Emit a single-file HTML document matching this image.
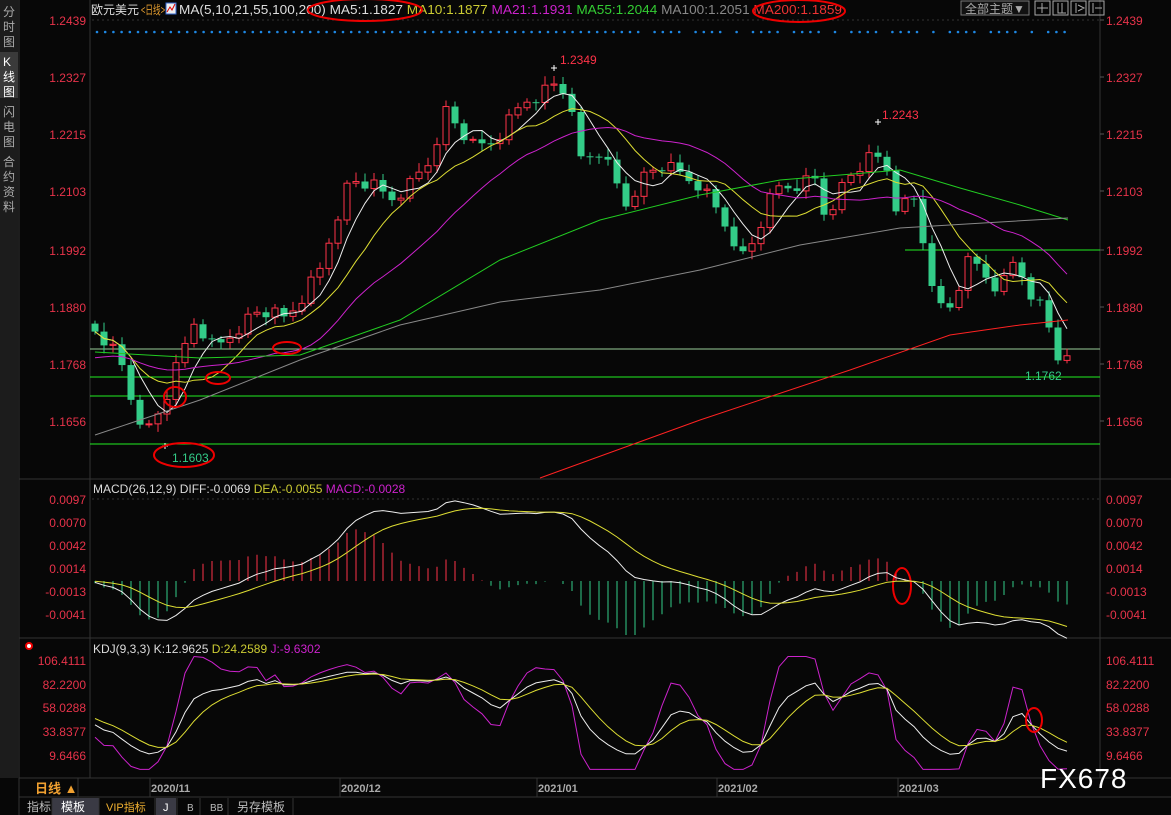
<!DOCTYPE html><html><head><meta charset="utf-8"><style>
body{margin:0;background:#070707;width:1171px;height:815px;overflow:hidden;font-family:"Liberation Sans","Noto Sans CJK SC",sans-serif}
svg{position:absolute;left:0;top:0}
</style></head><body>
<svg id="s" width="1171" height="815" xmlns="http://www.w3.org/2000/svg" font-family="Liberation Sans, Noto Sans CJK SC, sans-serif">
<rect x="0" y="0" width="18" height="778" fill="#1c1c1c"/>
<rect x="0" y="52" width="18" height="46" fill="#3a3a3a"/>
<g fill="#aaa" font-size="12">
<text x="3" y="16">分</text><text x="3" y="31">时</text><text x="3" y="46">图</text>
<text x="3" y="66" fill="#fff">K</text><text x="3" y="81" fill="#fff">线</text><text x="3" y="96" fill="#fff">图</text>
<text x="3" y="116">闪</text><text x="3" y="131">电</text><text x="3" y="146">图</text>
<text x="3" y="166">合</text><text x="3" y="181">约</text><text x="3" y="196">资</text><text x="3" y="211">料</text>
</g>
<line x1="19" y1="0" x2="19" y2="815" stroke="#333"/>
<line x1="90" y1="0" x2="90" y2="778" stroke="#333"/>
<line x1="1100" y1="0" x2="1100" y2="778" stroke="#333"/>
<line x1="19" y1="479" x2="1171" y2="479" stroke="#333"/>
<line x1="19" y1="638" x2="1171" y2="638" stroke="#333"/>
<line x1="19" y1="778" x2="1171" y2="778" stroke="#333"/>
<line x1="19" y1="797" x2="1171" y2="797" stroke="#333"/>
<g id="g"></g>
<!-- header -->
<text x="91" y="14" font-size="12" fill="#ddd" textLength="48" lengthAdjust="spacingAndGlyphs">欧元美元</text>
<text x="141" y="14" font-size="12" fill="#e8a030" textLength="24" lengthAdjust="spacingAndGlyphs">&lt;日线&gt;</text>
<rect x="166" y="3" width="10" height="11" fill="#eee" stroke="#36c"/><path d="M167 12l3-5 2 3 3-6" stroke="#d00" fill="none"/>
<text x="179" y="14" font-size="12.5" fill="#ddd" textLength="663" lengthAdjust="spacingAndGlyphs">MA(5,10,21,55,100,200) MA5:1.1827 <tspan fill="#cc3">MA10:1.1877</tspan> <tspan fill="#c2c">MA21:1.1931</tspan> <tspan fill="#3c3">MA55:1.2044</tspan> <tspan fill="#888">MA100:1.2051</tspan> <tspan fill="#e33">MA200:1.1859</tspan></text>
<ellipse cx="365" cy="10" rx="57" ry="11" fill="none" stroke="#e00" stroke-width="2"/>
<ellipse cx="799" cy="11" rx="46" ry="11" fill="none" stroke="#e00" stroke-width="2"/>
<rect x="961" y="1" width="68" height="14" fill="#111" stroke="#777"/><text x="965" y="13" font-size="12" fill="#aaa">全部主题▼</text>
<g fill="none" stroke="#aaa"><rect x="1035" y="1" width="15" height="14"/><rect x="1053" y="1" width="15" height="14"/><rect x="1071" y="1" width="15" height="14"/><rect x="1089" y="1" width="15" height="14"/></g>
<path d="M1042 3v10M1037 8h11M1058 3v10h8M1062 3v10M1076 3v10M1078 5l6 3-6 3M1093 3v10M1095 8h7" stroke="#aaa"/>
<!-- indicator titles -->
<text x="93" y="493" font-size="12" fill="#ddd">MACD(26,12,9) DIFF:-0.0069 <tspan fill="#cc3">DEA:-0.0055</tspan> <tspan fill="#c2c">MACD:-0.0028</tspan></text>
<text x="93" y="653" font-size="12" fill="#ddd">KDJ(9,3,3) K:12.9625 <tspan fill="#cc3">D:24.2589</tspan> <tspan fill="#c2c">J:-9.6302</tspan></text>
<circle cx="29" cy="646" r="3" fill="#fff" stroke="#e00" stroke-width="2"/>
<!-- bottom -->
<text x="35" y="793" font-size="13" fill="#f0a030" font-weight="bold">日线 ▲</text>
<g font-size="11" fill="#aaa" font-weight="bold"><text x="151" y="792">2020/11</text><text x="341" y="792">2020/12</text><text x="538" y="792">2021/01</text><text x="718" y="792">2021/02</text><text x="899" y="792">2021/03</text></g>
<g stroke="#333"><line x1="150" y1="778" x2="150" y2="797"/><line x1="340" y1="778" x2="340" y2="797"/><line x1="537" y1="778" x2="537" y2="797"/><line x1="717" y1="778" x2="717" y2="797"/><line x1="898" y1="778" x2="898" y2="797"/></g>
<line x1="78" y1="778" x2="78" y2="797" stroke="#333"/>
<rect x="52" y="798" width="47" height="17" fill="#3a3a44"/><rect x="156" y="798" width="20" height="17" fill="#3a3a44"/>
<g font-size="12" fill="#bbb"><text x="27" y="811">指标</text><text x="61" y="811" fill="#fff">模板</text><text x="106" y="811" fill="#f0b030" font-size="11">VIP指标</text><text x="163" y="811" fill="#fff" font-size="11">J</text><text x="187" y="811" font-size="10">B</text><text x="210" y="811" font-size="10">BB</text><text x="237" y="811">另存模板</text></g>
<g stroke="#333"><line x1="52" y1="798" x2="52" y2="815"/><line x1="99" y1="798" x2="99" y2="815"/><line x1="155" y1="798" x2="155" y2="815"/><line x1="177" y1="798" x2="177" y2="815"/><line x1="200" y1="798" x2="200" y2="815"/><line x1="228" y1="798" x2="228" y2="815"/><line x1="293" y1="798" x2="293" y2="815"/></g>
<text x="1040" y="788" font-size="28" fill="#fff" letter-spacing="1">FX678</text>
</svg>
<script>
var g=document.getElementById('g'),h='';
function L(a,c,w,e){h+='<polyline points="'+a.map(p=>p[0].toFixed(1)+','+p[1].toFixed(1)).join(' ')+'" fill="none" stroke="'+c+'" stroke-width="'+(w||1)+'" '+(e||'')+'/>';}
function T(x,y,t,c,s,a){h+='<text x="'+x+'" y="'+y+'" fill="'+c+'" font-size="'+(s||12)+'"'+(a?' text-anchor="'+a+'"':'')+'>'+t+'</text>';}
var pl=[[1.2439,20],[1.2327,77],[1.2215,134],[1.2103,191],[1.1992,250],[1.1880,307],[1.1768,364],[1.1656,421]];
pl.forEach(p=>{T(86,p[1]+5,p[0].toFixed(4),'#e8334a',12,'end');T(1106,p[1]+5,p[0].toFixed(4),'#e8334a',12);h+='<line x1="1100" y1="'+p[1]+'" x2="1104" y2="'+p[1]+'" stroke="#555"/>';});
h+='<line x1="92" y1="20" x2="1100" y2="20" stroke="#333" stroke-dasharray="2,3"/>';
[["0.0097",499],["0.0070",522],["0.0042",545],["0.0014",568],["-0.0013",591],["-0.0041",614]].forEach(p=>{T(86,p[1]+5,p[0],'#e8334a',12,'end');T(1106,p[1]+5,p[0],'#e8334a',12);});
h+='<line x1="92" y1="499" x2="1100" y2="499" stroke="#333" stroke-dasharray="2,3"/>';
[["106.4111",660],["82.2200",684],["58.0288",707],["33.8377",731],["9.6466",755]].forEach(p=>{T(86,p[1]+5,p[0],'#e8334a',12,'end');T(1106,p[1]+5,p[0],'#e8334a',12);});
for(var x=97;x<1072;x+=8.2){ if((Math.floor(x*7)%13)<3&&x>620)continue; h+='<circle cx="'+x.toFixed(1)+'" cy="32" r="1.3" fill="#1e88e5"/>';}
[250,349,377,396,444].forEach((y,i)=>h+='<line x1="'+(i==0?905:90)+'" y1="'+y+'" x2="1100" y2="'+y+'" stroke="'+(i==1?'#9c9':'#2e2')+'" />');
var kp=[[95,330],[105,340],[120,360],[135,410],[150,430],[165,400],[180,360],[195,320],[215,350],[240,325],[260,310],[285,320],[300,300],[320,270],[335,220],[350,180],[370,185],[390,200],[410,185],[430,160],[445,110],[460,130],[475,150],[495,140],[510,120],[525,100],[545,90],[560,80],[570,110],[580,160],[600,150],[615,180],[625,205],[640,180],[660,165],[680,175],[700,185],[720,215],[735,240],[745,260],[760,225],[775,190],[795,185],[815,180],[825,215],[840,190],[855,170],[870,160],[885,160],[895,205],[905,205],[915,200],[925,250],[935,290],[945,320],[955,295],[970,260],[985,275],[1000,290],[1015,260],[1030,290],[1040,305],[1050,330],[1060,362],[1068,364]];
function interp(x){for(var i=1;i<kp.length;i++)if(x<=kp[i][0]){var a=kp[i-1],b=kp[i];return a[1]+(b[1]-a[1])*(x-a[0])/(b[0]-a[0]);}return kp[kp.length-1][1];}
var xs=[],cl=[];for(var x=95;x<=1068;x+=9){xs.push(x);cl.push(interp(x)+((x*37)%11-5)*1.6);}
var n=xs.length,op=[],hi=[],lo=[];
for(var i=0;i<n;i++){op[i]=i?cl[i-1]:cl[0]-8;var t=Math.min(op[i],cl[i]),b=Math.max(op[i],cl[i]);hi[i]=t-3-(i*13%7);lo[i]=b+3+(i*11%6);}
for(var i=0;i<n;i++){var up=cl[i]<op[i],x=xs[i],t=Math.min(op[i],cl[i]),b=Math.max(op[i],cl[i]);if(b-t<1)b=t+1;var c=up?'#ff3348':'#33cc88';
h+='<line x1="'+x+'" y1="'+hi[i]+'" x2="'+x+'" y2="'+lo[i]+'" stroke="'+c+'"/>';
h+=up?'<rect x="'+(x-3)+'" y="'+t+'" width="6" height="'+(b-t)+'" fill="#070707" stroke="'+c+'"/>':'<rect x="'+(x-3.5)+'" y="'+t+'" width="7" height="'+(b-t)+'" fill="'+c+'"/>';}
function ma(arr,k){return arr.map((v,i)=>{var s=0,c=0;for(var j=Math.max(0,i-k+1);j<=i;j++){s+=arr[j];c++;}return s/c;});}
L(xs.map((x,i)=>[x,ma(cl,5)[i]]),'#eee');
L(xs.map((x,i)=>[x,ma(cl,10)[i]]),'#dd3');
var pre=[];for(i=0;i<12;i++)pre.push(360);var m21=ma(pre.concat(cl),21).slice(12);
L(xs.map((x,i)=>[x,m21[i]]),'#c2c');
L([[95,352],[200,358],[300,355],[400,320],[500,260],[600,220],[700,195],[780,180],[900,170],[960,188],[1020,205],[1068,220]],'#2c2');
L([[95,435],[200,400],[300,360],[400,325],[500,302],[600,290],[700,270],[800,245],[900,228],[1000,222],[1068,218]],'#888');
L([[540,478],[700,420],[850,370],[950,335],[1020,325],[1068,320]],'#f22');
T(560,64,'1.2349','#ff3348',12);T(882,119,'1.2243','#ff3348',12);T(1025,380,'1.1762','#33cc88',12);T(172,462,'1.1603','#33cc88',12);
h+='<path d="M551 68h6M554 65v6M875 122h6M878 119v6M162 446h6M165 443v6" stroke="#fff"/>';
[[184,455,30,12],[175,397,11,10],[218,378,12,6],[287,348,14,6],[902,586,9,18]].forEach(e=>h+='<ellipse cx="'+e[0]+'" cy="'+e[1]+'" rx="'+e[2]+'" ry="'+e[3]+'" fill="none" stroke="#e00" stroke-width="2"/>');
var pr=cl.map(y=>1.2439-(y-20)/5121);
function ema(a,k){var r=[],al=2/(k+1);a.forEach((v,i)=>r.push(i?r[i-1]+al*(v-r[i-1]):v));return r;}
var pp=[];for(i=0;i<20;i++)pp.push(pr[0]+0.002);pp=pp.concat(pr);
var e12=ema(pp,12),e26=ema(pp,26),dif=e12.map((v,i)=>v-e26[i]),dea=ema(dif,9);dif=dif.slice(20);dea=dea.slice(20);
var mx=Math.max.apply(null,dif),sc=0.0094/mx;
var Y=v=>581-v*sc*8519;
for(i=0;i<n;i++){var m=(dif[i]-dea[i])*2;h+='<line x1="'+xs[i]+'" y1="581" x2="'+xs[i]+'" y2="'+Y(m)+'" stroke="'+(m>0?'#ff3348':'#33cc88')+'"/>';}
L(xs.map((x,i)=>[x,Y(dif[i])]),'#eee');L(xs.map((x,i)=>[x,Y(dea[i])]),'#dd3');
var K=50,D=50,ks=[],ds=[],js=[];
for(i=0;i<n;i++){var H=Infinity,Lw=-Infinity;for(var j=Math.max(0,i-8);j<=i;j++){H=Math.min(H,hi[j]);Lw=Math.max(Lw,lo[j]);}
var rsv=(Lw-cl[i])/(Lw-H+0.01)*100;K=(2*K+rsv)/3;D=(2*D+K)/3;ks.push(K);ds.push(D);js.push(3*K-2*D);}
var KY=v=>764.5-Math.max(-5,Math.min(110,v))*0.982;
L(xs.map((x,i)=>[x,KY(js[i])]),'#c2c');L(xs.map((x,i)=>[x,KY(ks[i])]),'#eee');L(xs.map((x,i)=>[x,KY(ds[i])]),'#dd3');
h+='<ellipse cx="1034" cy="720" rx="8" ry="12" fill="none" stroke="#e00" stroke-width="2"/>';
g.innerHTML=h;
</script>
</body></html>
